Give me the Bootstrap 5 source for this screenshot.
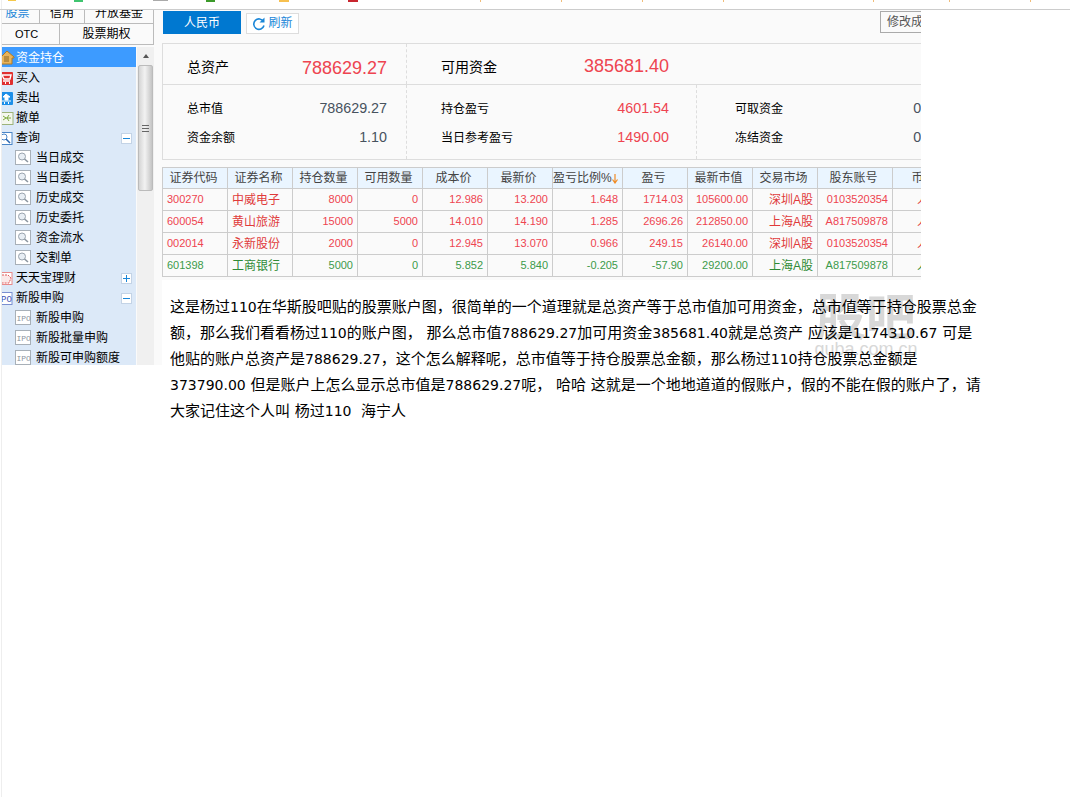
<!DOCTYPE html>
<html lang="zh">
<head>
<meta charset="utf-8">
<title>股票账户</title>
<link rel="stylesheet" href="https://cdn.jsdelivr.net/npm/bootstrap@5.3.0/dist/css/bootstrap.min.css">
<style>
html,body{margin:0;background:#fff;}
body{font-family:"Liberation Sans","Noto Sans CJK SC",sans-serif;font-size:12px;color:#000;width:1070px;height:797px;overflow:hidden;}
.page-edge{border-left:1px solid #eee;margin-left:1px;height:797px;}
.strip{height:10px;margin-left:-2px;border-bottom:1px solid #ccc;background-repeat:no-repeat;
background-image:linear-gradient(#f5c84a,#f5c84a),linear-gradient(#3fc46f,#3fc46f),linear-gradient(#aaa,#aaa),linear-gradient(#3c9a2a,#3c9a2a),linear-gradient(#f7c04f,#f7c04f),linear-gradient(#c8262f,#c8262f),linear-gradient(#f0bd7a,#f0bd7a),linear-gradient(#f0bd7a,#f0bd7a),linear-gradient(#f0bd7a,#f0bd7a),linear-gradient(#f0bd7a,#f0bd7a),linear-gradient(#f0bd7a,#f0bd7a),linear-gradient(#f0bd7a,#f0bd7a),linear-gradient(#f0bd7a,#f0bd7a);
background-size:8px 1px,9px 2px,15px 1px,9px 2px,10px 2px,10px 2px,1px 2px,1px 2px,1px 2px,1px 2px,1px 2px,1px 2px,1px 2px;
background-position:8px 0,74px 0,153px 0,206px 0,279px 0,348px 0,480px 0,561px 0,642px 0,723px 0,873px 0,949px 0,1030px 0;}
.shot-side{width:160px;height:355px;overflow:hidden;background:#fafafa;flex:none;}
.side-inner{width:152px;}
.tab-row{display:flex;border-right:1px solid #bbb;border-bottom:1px solid #bbb;text-align:center;}
.tab-a{height:14px;line-height:12px;overflow:hidden;}
.tab-a span{display:block;border-right:1px solid #bbb;}
.tab-a span:last-child{border-right:0;}
.tab-a span div{margin-top:-3px;}
.tab-b{height:21px;line-height:20px;}
.tab-b span{display:block;}
.w1{width:38px;color:#1a86d8;padding-right:6px;}.w2{width:45px;}.w3{flex:1;}
.w4{width:58px;border-right:1px solid #bbb;font-size:11px;padding-right:8px;}
.tree-wrap{margin-top:2px;display:flex;}
.tree{width:135px;background:#dce9f8;height:318px;overflow:hidden;margin:0;padding:0;list-style:none;}
.tree li{height:20px;padding-top:2px;display:flex;align-items:center;white-space:nowrap;}
.tree li.act{background:#3d9bff;color:#fff;}
.tree svg{flex:none;}
.ic-p{width:14px;margin-right:0;}
.lead-in{padding-left:13px;}
.ic-c{margin-right:3px;}
.tg{margin-left:auto;margin-right:4px;width:11px;height:11px;background:#fff;border:1px solid #c3d3e6;position:relative;}
.tg::before{content:"";position:absolute;left:1px;right:1px;top:4px;height:1px;background:#1a86d8;}
.tg.plus::after{content:"";position:absolute;top:1px;bottom:1px;left:4px;width:1px;background:#1a86d8;}
.vbar{width:17px;margin-left:1px;background:#f0f0f0;height:318px;flex:none;}
.vbar-up{height:18px;display:flex;justify-content:center;align-items:center;}
.vbar-up i{display:block;border:3px solid transparent;border-bottom:4px solid #555;border-top:0;}
.vbar-th{height:126px;margin:0 1px;background:linear-gradient(90deg,#d5d5d5,#f2f2f2 45%,#c4c4c4);border:1px solid #bbb;border-radius:2px;display:flex;align-items:center;justify-content:center;}
.vbar-th i{display:block;width:7px;height:7px;background:repeating-linear-gradient(#666 0 1px,transparent 1px 3px);}
.shot-main{width:759px;height:270px;overflow:hidden;background:#fafafa;}
.inner{width:900px;}
.tools{height:33px;padding-top:1px;display:flex;align-items:flex-start;}
.b-rmb.btn{width:78px;height:23px;margin-left:1px;padding:2px 0 0;border:0;border-radius:0;background:#0078d0;color:#fff;font-size:12px;line-height:21px;}
.b-ref.btn{width:53px;height:21px;margin:2px 0 0 5px;padding:0;border:1px solid #ddd;border-radius:0;background:#fff;color:#1a86d8;font-size:12px;line-height:19px;display:flex;align-items:center;justify-content:center;gap:2px;}
.b-mod.btn{width:70px;height:22px;margin-left:581px;padding:1px 0 0 6px;border:1px solid #aaa;border-radius:0;background:#fafafa;color:#555;font-size:12px;line-height:19px;text-align:left;}
.pnl{border:1px solid #ddd;border-right:0;height:117px;width:800px;}
.pnl-top,.pnl-bot{display:flex;}
.pnl-top{height:41px;border-bottom:1px solid #ddd;}
.pnl-bot{height:74px;}
.c1{width:244px;padding:0 19px 0 24px;border-right:1px dashed #ddd;flex:none;}
.c2{width:290px;padding:0 27px 0 34px;flex:none;}
.pnl-bot .c2{border-right:1px dashed #ddd;}
.c3{width:263px;padding:0 19px 0 38px;flex:none;}
.pnl-top .c1,.pnl-top .c2{padding-top:13px;}
.pnl-bot .c1,.pnl-bot .c2,.pnl-bot .c3{padding-top:9px;}
.kv{display:flex;justify-content:space-between;align-items:center;}
.pnl-bot .kv{height:29px;}
.big-l{font-size:14px;}
.big-v{font-size:18px;color:#ee4450;line-height:20px;}
.up-2{margin-top:-4px;margin-right:1px;}
.sm-v{font-size:14.3px;color:#47525e;}
.sm-r{font-size:14.3px;color:#ee4450;}
.grid-t{table-layout:fixed;width:794px;margin:7px 0 0;border-collapse:collapse;font-size:11px;}
.grid-t th,.grid-t td{border:1px solid #ccc;padding:0 4px;height:22px;white-space:nowrap;overflow:hidden;background:transparent;box-shadow:none;}
.grid-t th{background:#eaf5ff;color:#444;font-weight:400;font-size:12px;text-align:center;padding:0 3px 0 0;height:21px;}
.grid-t th.sorted{text-align:left;padding:0;}
.sorted svg{vertical-align:-2px;}
.grid-t td{text-align:right;color:#ee4450;}
.grid-t td.l{text-align:left;}
.grid-t td.cn{font-size:12px;color:#e03a3a;}
.grid-t tr.gr td{color:#3c9a4a;}
.grid-t tr.gr td.cn{color:#2f8a35;}
.post{position:relative;width:820px;padding:14px 0 0 8px;font-family:"DejaVu Sans","Noto Sans CJK SC",sans-serif;font-size:15px;line-height:26px;background:#fff;}
.post p{position:relative;margin:0;font-size:15px;}
.num{font-size:14px;}
.wm{position:absolute;left:652px;top:6px;width:104px;text-align:center;color:#d8d8d8;font-family:"Noto Sans CJK SC",sans-serif;}
.wm b{display:block;font-size:50px;line-height:54px;font-weight:700;}
.wm span{display:block;font-family:"Liberation Sans",sans-serif;font-size:18px;line-height:16px;margin-top:1px;}
</style>
</head>
<body>
<div class="page-edge">
<div class="strip"></div>
<div class="d-flex">
  <div class="shot-side">
    <div class="side-inner">
      <div class="tab-row tab-a"><span class="w1"><div>股票</div></span><span class="w2"><div>信用</div></span><span class="w3"><div>开放基金</div></span></div>
      <div class="tab-row tab-b"><span class="w4">OTC</span><span class="w3">股票期权</span></div>
      <div class="tree-wrap">
        <ul class="tree">
          <li class="act"><svg class="ic-p" width="14" height="14" viewBox="0 0 14 14"><path d="M-1 6 5 0l7 6v1H10v6H-1z" fill="#e8b45c" stroke="#b07a25"/><path d="M2 6h5M2 8h5M2 10h5" stroke="#8a6420"/></svg>资金持仓</li>
          <li><svg class="ic-p" width="14" height="15" viewBox="0 0 14 15"><rect x="-2" y="1" width="13" height="13" rx="1" fill="#e03030"/><path d="M0 4h9l-1 4H2zM1 10h7" stroke="#fff" fill="none" stroke-width="1.4"/><path d="M3 12h1M7 12h1" stroke="#fff" stroke-width="2"/></svg>买入</li>
          <li><svg class="ic-p" width="14" height="15" viewBox="0 0 14 15"><rect x="-2" y="1" width="13" height="13" rx="1" fill="#1d8fe8"/><path d="M4 3 1 6h2v3h3V6h2zM0 10h9" stroke="#fff" fill="#fff"/><path d="M2 12h1M6 12h1" stroke="#fff" stroke-width="2"/></svg>卖出</li>
          <li><svg class="ic-p" width="14" height="15" viewBox="0 0 14 15"><rect x="-2" y="1.5" width="13" height="12" fill="#f4f7ee" stroke="#9db37a"/><path d="M1 5l3 2-3 2M4 7h5M7 4l-2 3 2 3" stroke="#7ba83a" fill="none"/></svg>撤单</li>
          <li><svg class="ic-p" width="14" height="15" viewBox="0 0 14 15"><rect x="-2" y="1.5" width="12" height="12" fill="#fff" stroke="#4a86c8"/><circle cx="2" cy="6" r="3" fill="none" stroke="#4a86c8"/><path d="M4 8l4 4" stroke="#2a66b0" stroke-width="1.6"/></svg>查询<span class="tg"></span></li>
          <li class="lead-in"><svg class="ic-c" width="18" height="16" viewBox="0 0 18 16"><rect x=".5" y=".5" width="15" height="14" fill="#fff" stroke="#a8b0b8"/><circle cx="7" cy="6.500" r="3.5" fill="#e8eef4" stroke="#9aa4ae"/><path d="M9.500 9l3.500 3" stroke="#8a949e" stroke-width="1.6"/></svg>当日成交</li>
          <li class="lead-in"><svg class="ic-c" width="18" height="16" viewBox="0 0 18 16"><rect x=".5" y=".5" width="15" height="14" fill="#fff" stroke="#a8b0b8"/><circle cx="7" cy="6.500" r="3.5" fill="#e8eef4" stroke="#9aa4ae"/><path d="M9.500 9l3.500 3" stroke="#8a949e" stroke-width="1.6"/></svg>当日委托</li>
          <li class="lead-in"><svg class="ic-c" width="18" height="16" viewBox="0 0 18 16"><rect x=".5" y=".5" width="15" height="14" fill="#fff" stroke="#a8b0b8"/><circle cx="7" cy="6.500" r="3.5" fill="#e8eef4" stroke="#9aa4ae"/><path d="M9.500 9l3.500 3" stroke="#8a949e" stroke-width="1.6"/></svg>历史成交</li>
          <li class="lead-in"><svg class="ic-c" width="18" height="16" viewBox="0 0 18 16"><rect x=".5" y=".5" width="15" height="14" fill="#fff" stroke="#a8b0b8"/><circle cx="7" cy="6.500" r="3.5" fill="#e8eef4" stroke="#9aa4ae"/><path d="M9.500 9l3.500 3" stroke="#8a949e" stroke-width="1.6"/></svg>历史委托</li>
          <li class="lead-in"><svg class="ic-c" width="18" height="16" viewBox="0 0 18 16"><rect x=".5" y=".5" width="15" height="14" fill="#fff" stroke="#a8b0b8"/><circle cx="7" cy="6.500" r="3.5" fill="#e8eef4" stroke="#9aa4ae"/><path d="M9.500 9l3.500 3" stroke="#8a949e" stroke-width="1.6"/></svg>资金流水</li>
          <li class="lead-in"><svg class="ic-c" width="18" height="16" viewBox="0 0 18 16"><rect x=".5" y=".5" width="15" height="14" fill="#fff" stroke="#a8b0b8"/><circle cx="7" cy="6.500" r="3.5" fill="#e8eef4" stroke="#9aa4ae"/><path d="M9.500 9l3.500 3" stroke="#8a949e" stroke-width="1.6"/></svg>交割单</li>
          <li><svg class="ic-p" width="14" height="15" viewBox="0 0 14 15"><rect x="-2" y="1.500" width="12" height="12" fill="#fff" stroke="#e88a8a"/><path d="M0 4h6l3 3-2 5H0" fill="#fbe9e9" stroke="#e05a5a" stroke-dasharray="2 1"/></svg>天天宝理财<span class="tg plus"></span></li>
          <li><svg class="ic-p" width="14" height="15" viewBox="0 0 14 15"><rect x="-2" y="1.500" width="12" height="12" fill="#fff" stroke="#7a8fd0"/><text x="-1" y="11" font-family="Liberation Mono" font-size="9" fill="#3f55b5">PO</text></svg>新股申购<span class="tg"></span></li>
          <li class="lead-in"><svg class="ic-c" width="18" height="16" viewBox="0 0 18 16"><rect x=".5" y=".5" width="15" height="14" fill="#fff" stroke="#a8b0b8"/><text x="1.500" y="11" font-family="Liberation Mono" font-size="8" fill="#8a949e">IPO</text></svg>新股申购</li>
          <li class="lead-in"><svg class="ic-c" width="18" height="16" viewBox="0 0 18 16"><rect x=".5" y=".5" width="15" height="14" fill="#fff" stroke="#a8b0b8"/><text x="1.500" y="11" font-family="Liberation Mono" font-size="8" fill="#8a949e">IPO</text></svg>新股批量申购</li>
          <li class="lead-in"><svg class="ic-c" width="18" height="16" viewBox="0 0 18 16"><rect x=".5" y=".5" width="15" height="14" fill="#fff" stroke="#a8b0b8"/><text x="1.500" y="11" font-family="Liberation Mono" font-size="8" fill="#8a949e">IPO</text></svg>新股可申购额度</li>
        </ul>
        <div class="vbar"><div class="vbar-up"><i></i></div><div class="vbar-th"><i></i></div></div>
      </div>
    </div>
  </div>
  <div>
    <div class="shot-main"><div class="inner">
      <div class="tools">
        <button class="btn b-rmb" type="button">人民币</button>
        <button class="btn b-ref" type="button"><svg width="14" height="14" viewBox="0 0 14 14"><path d="M11.500 4.500A5.200 5.200 0 1 0 12 8.500" fill="none" stroke="#1a86d8" stroke-width="1.600"/><path d="M12.500 .5v5h-5z" fill="#1a86d8"/></svg>刷新</button>
        <button class="btn b-mod" type="button">修改成本</button>
      </div>
      <div class="pnl">
        <div class="pnl-top">
          <div class="c1"><div class="kv"><span class="big-l">总资产</span><span class="big-v">788629.27</span></div></div>
          <div class="c2"><div class="kv"><span class="big-l">可用资金</span><span class="big-v up-2">385681.40</span></div></div>
        </div>
        <div class="pnl-bot">
          <div class="c1"><div class="kv"><span>总市值</span><span class="sm-v">788629.27</span></div><div class="kv"><span>资金余额</span><span class="sm-v">1.10</span></div></div>
          <div class="c2"><div class="kv"><span>持仓盈亏</span><span class="sm-r">4601.54</span></div><div class="kv"><span>当日参考盈亏</span><span class="sm-r">1490.00</span></div></div>
          <div class="c3"><div class="kv"><span>可取资金</span><span class="sm-v">0.00</span></div><div class="kv"><span>冻结资金</span><span class="sm-v">0.00</span></div></div>
        </div>
      </div>
      <table class="grid-t">
        <colgroup><col width="65"><col width="65"><col width="65"><col width="65"><col width="65"><col width="65"><col width="70"><col width="65"><col width="65"><col width="65"><col width="75"><col width="65"></colgroup>
        <thead><tr><th>证券代码</th><th>证券名称</th><th>持仓数量</th><th>可用数量</th><th>成本价</th><th>最新价</th><th class="sorted">盈亏比例%<svg width="6" height="11" viewBox="0 0 6 11"><path d="M3 1v8M.5 6.500 3 10l2.500-3.500" fill="none" stroke="#f08a24" stroke-width="1.200"/></svg></th><th>盈亏</th><th>最新市值</th><th>交易市场</th><th>股东账号</th><th>币种</th></tr></thead>
        <tbody>
          <tr><td class="l">300270</td><td class="l cn">中威电子</td><td>8000</td><td>0</td><td>12.986</td><td>13.200</td><td>1.648</td><td>1714.03</td><td>105600.00</td><td class="cn">深圳A股</td><td>0103520354</td><td class="cn">人民币</td></tr>
          <tr><td class="l">600054</td><td class="l cn">黄山旅游</td><td>15000</td><td>5000</td><td>14.010</td><td>14.190</td><td>1.285</td><td>2696.26</td><td>212850.00</td><td class="cn">上海A股</td><td>A817509878</td><td class="cn">人民币</td></tr>
          <tr><td class="l">002014</td><td class="l cn">永新股份</td><td>2000</td><td>0</td><td>12.945</td><td>13.070</td><td>0.966</td><td>249.15</td><td>26140.00</td><td class="cn">深圳A股</td><td>0103520354</td><td class="cn">人民币</td></tr>
          <tr class="gr"><td class="l">601398</td><td class="l cn">工商银行</td><td>5000</td><td>0</td><td>5.852</td><td>5.840</td><td>-0.205</td><td>-57.90</td><td>29200.00</td><td class="cn">上海A股</td><td>A817509878</td><td class="cn">人民币</td></tr>
        </tbody>
      </table>
    </div></div>
    <div class="post">
      <div class="wm"><b>股吧</b><span>guba.com.cn</span></div>
      <p>这是杨过<span class="num">110</span>在华斯股吧贴的股票账户图，很简单的一个道理就是总资产等于总市值加可用资金，总市值等于持仓股票总金额，那么我们看看杨过<span class="num">110</span>的账户图， 那么总市值<span class="num">788629.27</span>加可用资金<span class="num">385681.40</span>就是总资产 应该是<span class="num">1174310.67</span> 可是他贴的账户总资产是<span class="num">788629.27</span>，这个怎么解释呢，总市值等于持仓股票总金额，那么杨过<span class="num">110</span>持仓股票总金额是<span class="num">373790.00</span> 但是账户上怎么显示总市值是<span class="num">788629.27</span>呢， 哈哈 这就是一个地地道道的假账户，假的不能在假的账户了，请大家记住这个人叫 杨过<span class="num">110</span>&nbsp; 海宁人</p>
    </div>
  </div>
</div>
</div>
</body>
</html>
